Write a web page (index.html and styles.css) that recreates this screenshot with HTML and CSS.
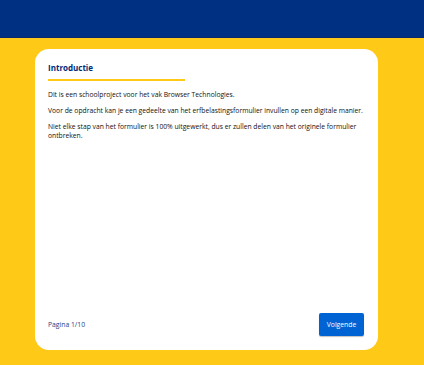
FILE: index.html
```html
<!DOCTYPE html>
<html lang="nl">
<head>
<meta charset="utf-8">
<title>Belastingformulier</title>
<link rel="stylesheet" href="styles.css">
</head>
<body>
<header class="topbar"></header>
<main class="page">
  <section class="card">
    <div class="content">
      <h1 class="title">Introductie</h1>
      <p>Dit is een schoolproject voor het vak Browser Technologies.</p>
      <p>Voor de opdracht kan je een gedeelte van het erfbelastingsformulier invullen op een digitale manier.</p>
      <p>Niet elke stap van het formulier is 100% uitgewerkt, dus er zullen delen van het originele formulier ontbreken.</p>
    </div>
    <footer class="card-footer">
      <span class="pager">Pagina 1/10</span>
      <button class="next" type="button">Volgende</button>
    </footer>
  </section>
</main>
</body>
</html>
```
FILE: styles.css
```css
html, body {
  margin: 0;
  padding: 0;
}
body {
  background: #ffc917;
  font-family: "Open Sans", "Noto Sans", sans-serif;
  height: 365px;
  overflow: hidden;
}
.topbar {
  height: 37px;
  background: #003082;
  border-bottom: 1px solid #0b2770;
}
.page {
  padding: 11px 0 0 35px;
}
.card {
  box-sizing: border-box;
  width: 343px;
  height: 301px;
  background: #fff;
  border-radius: 14px;
  padding: 13px 13px 14px 13px;
  display: flex;
  flex-direction: column;
  justify-content: space-between;
}
.content {
  margin-right: -6px;
}
.title {
  margin: 0 0 9px 0;
  font-size: 8px;
  font-weight: 700;
  color: #002a7a;
  width: 137px;
  padding-bottom: 6px;
  border-bottom: 2px solid #ffc917;
  line-height: 11px;
}
.content p {
  margin: 0 0 7px 0;
  font-size: 6.75px;
  line-height: 9px;
  color: #111;
}
.card-footer {
  display: flex;
  justify-content: space-between;
  align-items: center;
}
.pager {
  font-size: 6.8px;
  color: #1c3f8a;
}
.next {
  width: 45px;
  height: 23px;
  border: none;
  border-radius: 2px;
  background: #0063d3;
  color: #fff;
  font-family: inherit;
  font-size: 6.8px;
  padding: 0;
  box-shadow: 0 1px 1px rgba(0, 0, 0, 0.25);
  margin-right: 1px;
}
```
